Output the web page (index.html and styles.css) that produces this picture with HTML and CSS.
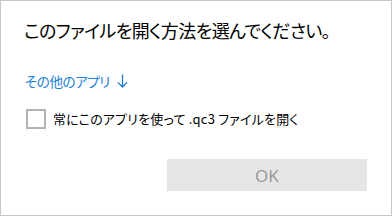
FILE: index.html
```html
<!DOCTYPE html>
<html lang="ja">
<head>
<meta charset="utf-8">
<link rel="stylesheet" href="styles.css">
</head>
<body>
<div class="dialog">
  <h1 class="title">このファイルを開く方法を選んでください。</h1>
  <a class="more" href="#">その他のアプリ<svg class="arrow" width="11" height="14" viewBox="0 0 11 14"><path d="M5.5 0.5V13M0.9 8.4L5.5 13L10.1 8.4" fill="none" stroke="currentColor" stroke-width="1.3"/></svg></a>
  <label class="check">
    <span class="box"></span>
    <span class="label-text">常にこのアプリを使って .qc3 ファイルを開く</span>
  </label>
  <div class="actions">
    <button class="ok" type="button">OK</button>
  </div>
</div>
</body>
</html>
```

FILE: styles.css
```css
html, body {
  margin: 0;
  padding: 0;
  background: #ffffff;
}
body {
  font-family: "Noto Sans CJK JP", "Noto Sans", sans-serif;
  font-feature-settings: "palt";
}
.dialog {
  box-sizing: border-box;
  width: 392px;
  height: 216px;
  border: 1px solid #c8c8c8;
  padding: 0 24px;
  display: flex;
  flex-direction: column;
}
.title {
  margin: 17px 0 0 -1px;
  font-size: 18px;
  letter-spacing: -0.6px;
  font-weight: 400;
  line-height: 24px;
  color: #000000;
  white-space: nowrap;
}
.more {
  margin-top: 29px;
  font-size: 13.5px;
  letter-spacing: -0.4px;
  line-height: 20px;
  color: #1a7fd6;
  text-decoration: none;
  display: flex;
  align-items: center;
  align-self: flex-start;
}
.arrow {
  margin-left: 7px;
}
.check {
  margin-top: 18px;
  display: flex;
  align-items: center;
  gap: 7px;
}
.box {
  box-sizing: border-box;
  width: 20px;
  height: 20px;
  border: 2px solid #b3b3b3;
  margin-left: 1px;
}
.label-text {
  font-size: 13px;
  letter-spacing: 0.2px;
  line-height: 20px;
  color: #000000;
}
.actions {
  margin-top: 30px;
  display: flex;
  justify-content: flex-end;
}
.ok {
  width: 200px;
  height: 32px;
  border: none;
  background: #e6e6e6;
  color: #999999;
  font-family: "Noto Sans", sans-serif;
  font-size: 17px;
  padding: 0;
}
```
